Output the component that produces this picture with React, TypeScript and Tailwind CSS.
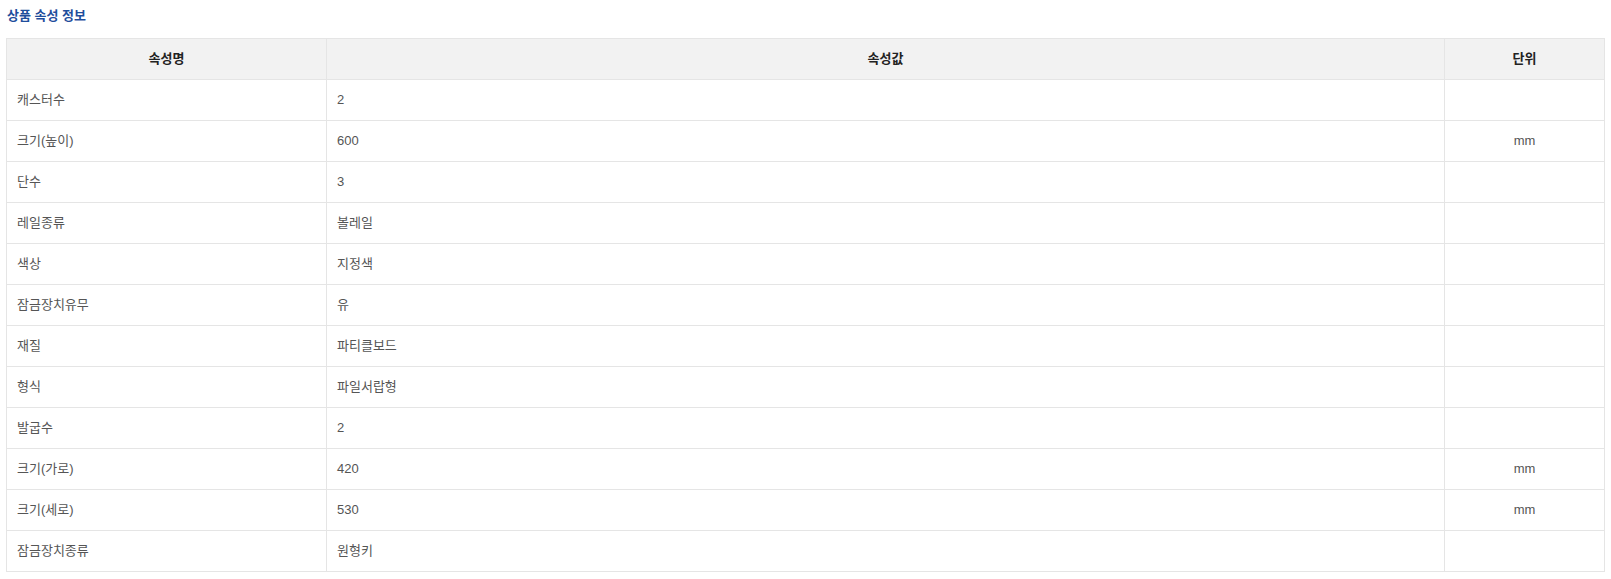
const rows: [string, string, string][] = [
  ["캐스터수", "2", ""],
  ["크기(높이)", "600", "mm"],
  ["단수", "3", ""],
  ["레일종류", "볼레일", ""],
  ["색상", "지정색", ""],
  ["잠금장치유무", "유", ""],
  ["재질", "파티클보드", ""],
  ["형식", "파일서랍형", ""],
  ["발굽수", "2", ""],
  ["크기(가로)", "420", "mm"],
  ["크기(세로)", "530", "mm"],
  ["잠금장치종류", "원형키", ""],
]

export default function App() {
  return (
    <div
      className="bg-white px-[6px] pt-[6px] pb-2 text-[13px]"
      style={{ fontFamily: '"Liberation Sans", "Noto Sans CJK KR", sans-serif' }}
    >
      <h2 className="h-[20px] pl-[1px] text-[13px] leading-[20px] font-bold text-[#1f4e9c]">상품 속성 정보</h2>
      <table className="mt-[12px] w-full border-collapse table-fixed">
        <colgroup>
          <col className="w-[320px]" />
          <col />
          <col className="w-[160px]" />
        </colgroup>
        <thead>
          <tr className="h-[41px] bg-[#f2f2f2] text-[#222]">
            <th className="border border-[#e5e5e5] font-bold text-center">속성명</th>
            <th className="border border-[#e5e5e5] font-bold text-center">속성값</th>
            <th className="border border-[#e5e5e5] font-bold text-center">단위</th>
          </tr>
        </thead>
        <tbody>
          {rows.map(([name, value, unit]) => (
            <tr key={name} className="h-[41px] text-[#555]">
              <td className="border border-[#e5e5e5] pl-[10px]">{name}</td>
              <td className="border border-[#e5e5e5] pl-[10px]">{value}</td>
              <td className="border border-[#e5e5e5] text-center">{unit}</td>
            </tr>
          ))}
        </tbody>
      </table>
    </div>
  )
}
